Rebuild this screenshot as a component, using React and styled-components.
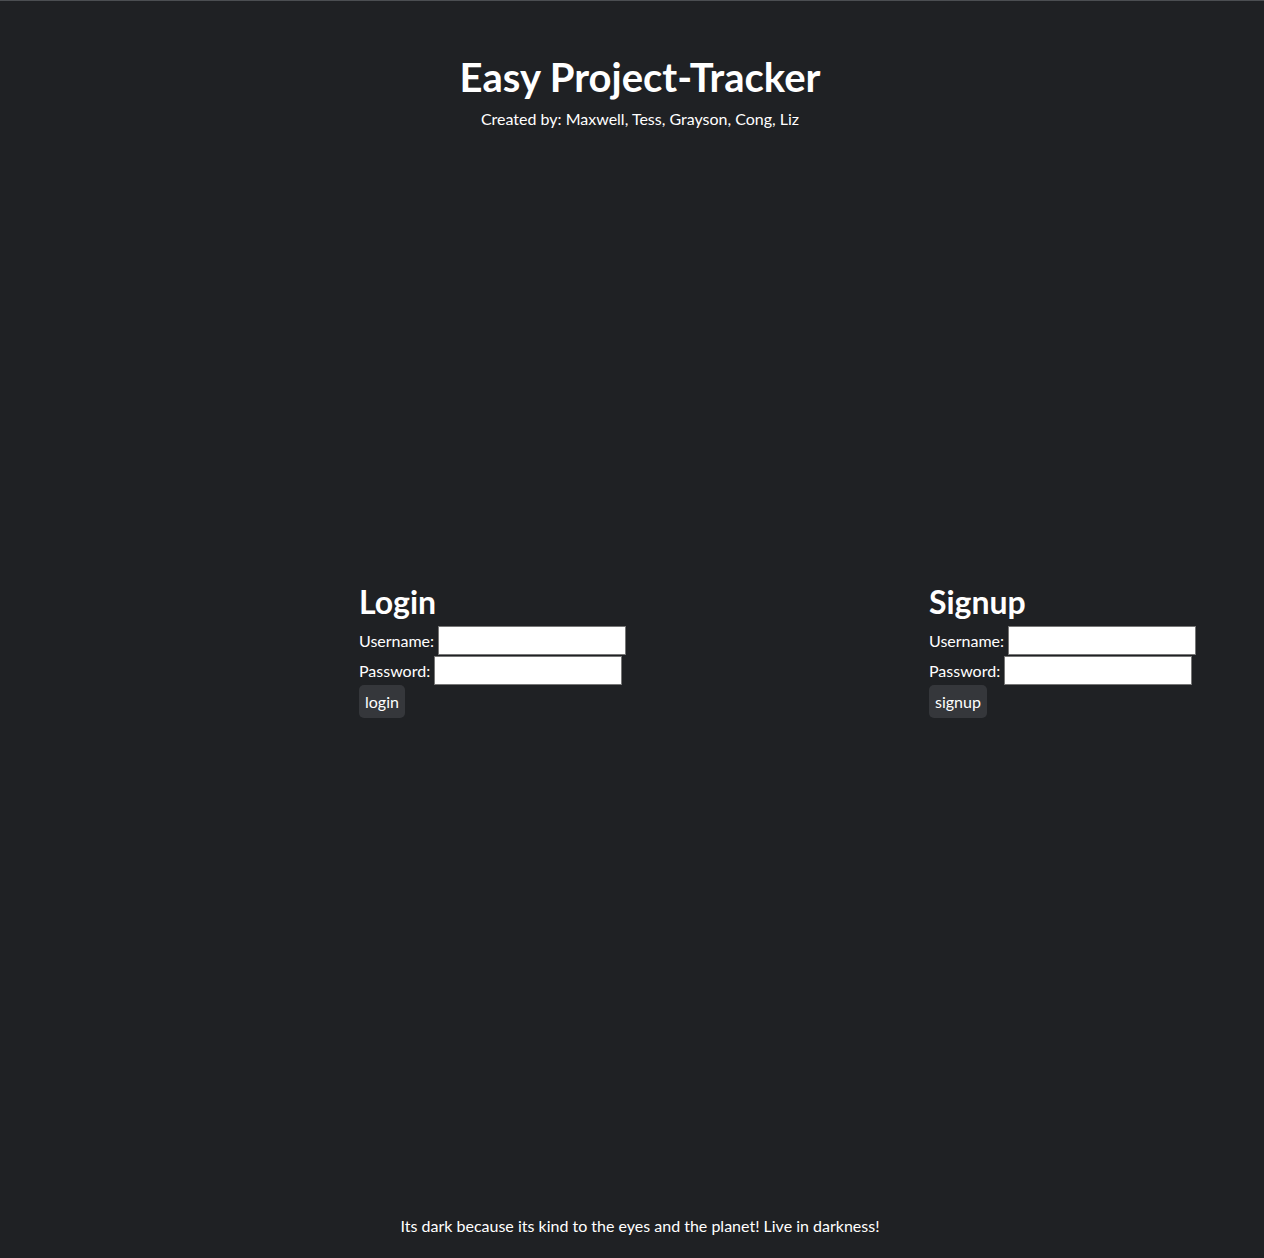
import React from "react";
import styled, { createGlobalStyle } from "styled-components";

const Global = createGlobalStyle`
  html, body { margin: 0; padding: 0; background: #1f2124; }
  body { font-family: Lato, "Segoe UI", sans-serif; color: #ffffff; }
  * { box-sizing: border-box; }
`;

const Page = styled.div`
  min-height: 1258px;
  border-top: 1px solid #4b4e52;
  padding-left: 16px;
  display: flex;
  flex-direction: column;
`;

const Header = styled.header`
  display: flex;
  flex-direction: column;
  align-items: center;
  padding-top: 52px;
`;

const Title = styled.h1`
  margin: 0;
  font-size: 40px;
  font-weight: 700;
  line-height: 48px;
`;

const Credits = styled.p`
  margin: 6px 0 0;
  font-size: 16px;
  line-height: 24px;
`;

const Main = styled.main`
  flex: 1;
  display: grid;
  grid-template-columns: 570px auto;
  align-content: center;
  padding-left: 343px;
  padding-bottom: 44px;
`;

const Panel = styled.section`
  display: flex;
  flex-direction: column;
  align-items: flex-start;
`;

const Heading = styled.h2`
  margin: 0 0 4px;
  font-size: 32px;
  font-weight: 700;
  line-height: 38px;
`;

const Row = styled.label`
  display: flex;
  align-items: center;
  gap: 4px;
  height: 30px;
  font-size: 16px;
`;

const Field = styled.input`
  width: 188px;
  height: 29px;
  border: 1px solid #767676;
  background: #ffffff;
  padding: 1px 2px;
  font-size: 14px;
`;

const Button = styled.button`
  height: 33px;
  padding: 0 6px;
  border: none;
  border-radius: 5px;
  background: #35373b;
  color: #ffffff;
  font-family: inherit;
  font-size: 16px;
`;

const Footer = styled.footer`
  text-align: center;
  font-size: 16px;
  line-height: 24px;
  padding-bottom: 20px;
`;

function AuthForm({ title, action }) {
  return (
    <Panel>
      <Heading>{title}</Heading>
      <Row>
        Username: <Field type="text" />
      </Row>
      <Row>
        Password: <Field type="password" />
      </Row>
      <Button type="button">{action}</Button>
    </Panel>
  );
}

export default function App() {
  return (
    <>
      <Global />
      <Page>
        <Header>
          <Title>Easy Project-Tracker</Title>
          <Credits>Created by: Maxwell, Tess, Grayson, Cong, Liz</Credits>
        </Header>
        <Main>
          <AuthForm title="Login" action="login" />
          <AuthForm title="Signup" action="signup" />
        </Main>
        <Footer>Its dark because its kind to the eyes and the planet! Live in darkness!</Footer>
      </Page>
    </>
  );
}
